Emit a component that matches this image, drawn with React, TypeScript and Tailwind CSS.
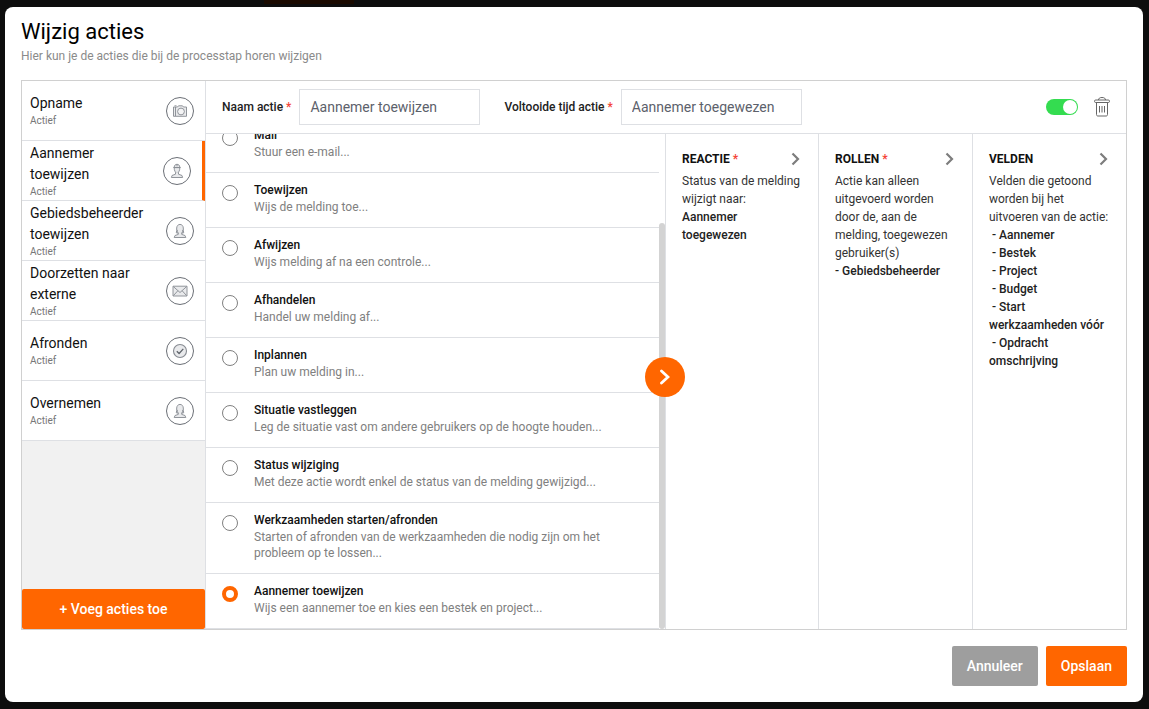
import React, { useState } from "react";

type IconName = "camera" | "worker" | "person" | "mail" | "check";

const actions: { id: number; name: string; icon: IconName }[] = [
  { id: 1, name: "Opname", icon: "camera" },
  { id: 2, name: "Aannemer toewijzen", icon: "worker" },
  { id: 3, name: "Gebiedsbeheerder toewijzen", icon: "person" },
  { id: 4, name: "Doorzetten naar externe", icon: "mail" },
  { id: 5, name: "Afronden", icon: "check" },
  { id: 6, name: "Overnemen", icon: "person" },
];

const types = [
  { id: "mail", title: "Mail", text: "Stuur een e-mail..." },
  { id: "assign", title: "Toewijzen", text: "Wijs de melding toe..." },
  { id: "reject", title: "Afwijzen", text: "Wijs melding af na een controle..." },
  { id: "handle", title: "Afhandelen", text: "Handel uw melding af..." },
  { id: "plan", title: "Inplannen", text: "Plan uw melding in..." },
  {
    id: "record",
    title: "Situatie vastleggen",
    text: "Leg de situatie vast om andere gebruikers op de hoogte houden...",
  },
  {
    id: "status",
    title: "Status wijziging",
    text: "Met deze actie wordt enkel de status van de melding gewijzigd...",
  },
  {
    id: "work",
    title: "Werkzaamheden starten/afronden",
    text: "Starten of afronden van de werkzaamheden die nodig zijn om het probleem op te lossen...",
  },
  {
    id: "contractor",
    title: "Aannemer toewijzen",
    text: "Wijs een aannemer toe en kies een bestek en project...",
  },
];

const fields = [
  "Aannemer",
  "Bestek",
  "Project",
  "Budget",
  "Start werkzaamheden vóór",
  "Opdracht omschrijving",
];

function ActionIcon({ name }: { name: IconName }) {
  return (
    <svg
      viewBox="0 0 16 16"
      className="h-4 w-4"
      fill="#e9eaec"
      stroke="#868a91"
      strokeWidth="0.9"
      strokeLinejoin="round"
      aria-hidden="true"
    >
      {name === "camera" && (
        <>
          <path d="M1.500 4h4l1-1.200h4l1 1.200h3v9.300h-13z" />
          <circle cx="9" cy="8.500" r="3.400" fill="#f4f4f5" />
          <path d="M2.500 2.800h2M3.500 4v9" />
        </>
      )}
      {name === "worker" && (
        <>
          <path d="M5.200 4.600c0 3.200 1 5 2.800 5s2.800-1.800 2.800-5z" />
          <path d="M5.200 4.300C5.300 2.300 6.400 1.300 8 1.300s2.700 1 2.800 3M4.300 4.500h7.400M8 1.300v2" />
          <path d="M6.500 9.200v2L3 12.500 2.400 14.500h11.200L13 12.500l-3.500-1.300v-2" />
        </>
      )}
      {name === "person" && (
        <>
          <path d="M4.300 9.800C4.900 8.200 4.600 6.800 4.700 5c.1-2.200 1.500-3.600 3.300-3.600s3.200 1.400 3.300 3.600c.1 1.800-.2 3.200.4 4.800l-2 .4v1.200l3.300 1.100.8 2H2.200l.8-2 3.300-1.100v-1.200z" />
          <path d="M6.300 10.200c-.8-.8-1.100-2-1.100-3.300M9.700 10.200c.8-.8 1.100-2 1.100-3.300" fill="none" />
        </>
      )}
      {name === "mail" && (
        <>
          <path d="M1 3.200h14v9.800H1z" />
          <path d="M1.500 3.700L8 9.500l6.500-5.800M1.500 12.500l4.300-4.700M14.500 12.500l-4.300-4.700" fill="none" />
        </>
      )}
      {name === "check" && (
        <>
          <circle cx="8" cy="8" r="6.500" strokeWidth="1.100" />
          <path d="M4.800 8.200l2.300 2.300 4.200-4.600" fill="none" stroke="#5f646b" strokeWidth="1.300" />
        </>
      )}
    </svg>
  );
}

function Chevron() {
  return (
    <svg viewBox="0 0 9 14" className="h-3.5 w-[9px]" fill="none" aria-hidden="true">
      <path d="M1.500 1.500L7 7l-5.500 5.500" stroke="#7d7d7d" strokeWidth="2.200" />
    </svg>
  );
}

function Column({
  title,
  required,
  children,
}: {
  title: string;
  required?: boolean;
  children: React.ReactNode;
}) {
  return (
    <section className="border-l border-[#dee0e4] px-4 pt-4 leading-[18px] text-[#333]">
      <button className="mb-1 flex w-full cursor-pointer items-center justify-between pr-0.5 font-bold text-[#111]">
        <span>
          {title}
          {required && <span className="text-[#f44336]"> *</span>}
        </span>
        <Chevron />
      </button>
      {children}
    </section>
  );
}

export default function App() {
  const [active, setActive] = useState(2);
  const [type, setType] = useState("contractor");
  const [enabled, setEnabled] = useState(true);
  const [name, setName] = useState("Aannemer toewijzen");
  const [doneName, setDoneName] = useState("Aannemer toegewezen");

  return (
    <div className="relative h-screen bg-[#0d0d0d] pt-[7px] pr-1.5 pb-[7px] pl-[5px] font-['Roboto',sans-serif] text-xs">
      {/* active tab of the dimmed page behind the dialog */}
      <div className="absolute top-0 left-[23%] h-1 w-[90px] bg-[#1a0a00]" />
      <main className="flex h-full flex-col rounded-lg bg-white p-4">
        <header className="mb-[15px]">
          <h1 className="text-[22px] leading-[18px] text-black">Wijzig acties</h1>
          <p className="mt-1.5 leading-[18px] text-[#8a8a8a]">
            Hier kun je de acties die bij de processtap horen wijzigen
          </p>
        </header>

        <div className="flex min-h-0 flex-1 border border-[#d0d0d0]">
          <aside className="flex w-[184px] shrink-0 flex-col border-r border-[#dee0e4] bg-[#f1f1f1]">
            {actions.map((action) => (
              <button
                key={action.id}
                onClick={() => setActive(action.id)}
                className={`flex h-[60px] shrink-0 cursor-pointer items-center justify-between border-b border-b-[#dee0e4] bg-white pr-[11px] pl-2 text-left ${
                  active === action.id ? "border-r-[3px] border-r-[#ff6600]" : ""
                }`}
              >
                <span className="w-[120px]">
                  <span className="block text-sm leading-[21px] text-[#111]">{action.name}</span>
                  <span className="block text-[10px] leading-[14px] text-[#777]">Actief</span>
                </span>
                <span className="flex h-7 w-7 shrink-0 items-center justify-center rounded-full border border-[#6b6f76]">
                  <ActionIcon name={action.icon} />
                </span>
              </button>
            ))}
            <button className="mt-auto h-10 shrink-0 cursor-pointer rounded-xs bg-[#ff6600] text-sm font-medium text-white">
              + Voeg acties toe
            </button>
          </aside>

          <div className="flex min-w-0 flex-1 flex-col">
            <div className="flex h-[53px] shrink-0 items-center border-b border-[#dee0e4] px-4">
              <label htmlFor="name" className="mr-2 font-medium text-[#222]">
                Naam actie <span className="text-[#f44336]">*</span>
              </label>
              <input
                id="name"
                value={name}
                onChange={(e) => setName(e.target.value)}
                className="mr-6 h-9 w-[181px] border border-[#dee0e4] px-2.5 text-sm text-[#5c616b]"
              />
              <label htmlFor="doneName" className="mr-2 font-medium text-[#222]">
                Voltooide tijd actie <span className="text-[#f44336]">*</span>
              </label>
              <input
                id="doneName"
                value={doneName}
                onChange={(e) => setDoneName(e.target.value)}
                className="h-9 w-[181px] border border-[#dee0e4] px-2.5 text-sm text-[#5c616b]"
              />
              <input
                type="checkbox"
                aria-label="Actief"
                checked={enabled}
                onChange={() => setEnabled(!enabled)}
                className="ml-auto flex h-4 w-8 cursor-pointer appearance-none rounded-full bg-[#bbb] p-px before:h-3.5 before:w-3.5 before:rounded-full before:bg-white checked:justify-end checked:bg-[#34dc50]"
              />
              <button aria-label="Verwijderen" className="ml-4 cursor-pointer">
                <svg viewBox="0 0 16 20" className="h-5 w-4" fill="none" stroke="#666" aria-hidden="true">
                  <path d="M4.500 3C4.500 1.500 5.500.5 8 .5s3.500 1 3.500 2.500" />
                  <rect x="0.500" y="3" width="15" height="2.500" rx="1.200" />
                  <path d="M2.500 5.500v12c0 1 .5 1.500 1.500 1.500h8c1 0 1.500-.5 1.500-1.500v-12" />
                  <path d="M5.500 9v6.500M8 9v6.500M10.500 9v6.500" />
                </svg>
              </button>
            </div>

            <div className="grid min-h-0 flex-1 grid-cols-[459fr_153fr_154fr_154fr]">
              <div className="relative flex min-h-0">
                <div className="flex min-w-0 flex-1 flex-col justify-end overflow-hidden">
                  {types.map((item) => (
                    <label
                      key={item.id}
                      className="flex shrink-0 cursor-pointer gap-4 border-b border-[#dee0e4] pt-2 pr-12 pb-3 pl-4"
                    >
                      <input
                        type="radio"
                        name="type"
                        checked={type === item.id}
                        onChange={() => setType(item.id)}
                        className="mt-1 h-4 w-4 shrink-0 appearance-none rounded-full border border-[#808080] bg-white checked:border-4 checked:border-[#ff6600]"
                      />
                      <span>
                        <span className="block leading-[18px] font-medium text-[#111]">{item.title}</span>
                        <span className="block leading-4 text-[#808080]">{item.text}</span>
                      </span>
                    </label>
                  ))}
                </div>
                <div className="flex w-1.5 shrink-0 flex-col justify-end">
                  <div className="h-[82%] rounded-full bg-[#d3d3d3]" />
                </div>
                <button
                  aria-label="Volgende"
                  className="absolute top-1/2 -right-5 z-10 -mt-[25px] flex h-10 w-10 cursor-pointer items-center justify-center rounded-full bg-[#ff6600]"
                >
                  <svg viewBox="0 0 10 16" className="h-4 w-2.5" fill="none" aria-hidden="true">
                    <path d="M1.500 2L8 8l-6.500 6" stroke="#fff" strokeWidth="2.800" strokeLinecap="round" />
                  </svg>
                </button>
              </div>

              <Column title="REACTIE" required>
                <p>Status van de melding wijzigt naar:</p>
                <p className="font-medium text-[#222]">Aannemer toegewezen</p>
              </Column>
              <Column title="ROLLEN" required>
                <p>Actie kan alleen uitgevoerd worden door de, aan de melding, toegewezen gebruiker(s)</p>
                <p className="font-medium text-[#222]">- Gebiedsbeheerder</p>
              </Column>
              <Column title="VELDEN">
                <p>Velden die getoond worden bij het uitvoeren van de actie:</p>
                <ul className="font-medium text-[#222]">
                  {fields.map((field) => (
                    <li key={field}>&nbsp;- {field}</li>
                  ))}
                </ul>
              </Column>
            </div>
          </div>
        </div>

        <footer className="mt-4 flex justify-end gap-2 text-sm font-medium text-white">
          <button className="h-10 cursor-pointer rounded-xs bg-[#9e9e9e] px-[15px]">Annuleer</button>
          <button className="h-10 cursor-pointer rounded-xs bg-[#ff6600] px-[15px]">Opslaan</button>
        </footer>
      </main>
    </div>
  );
}
